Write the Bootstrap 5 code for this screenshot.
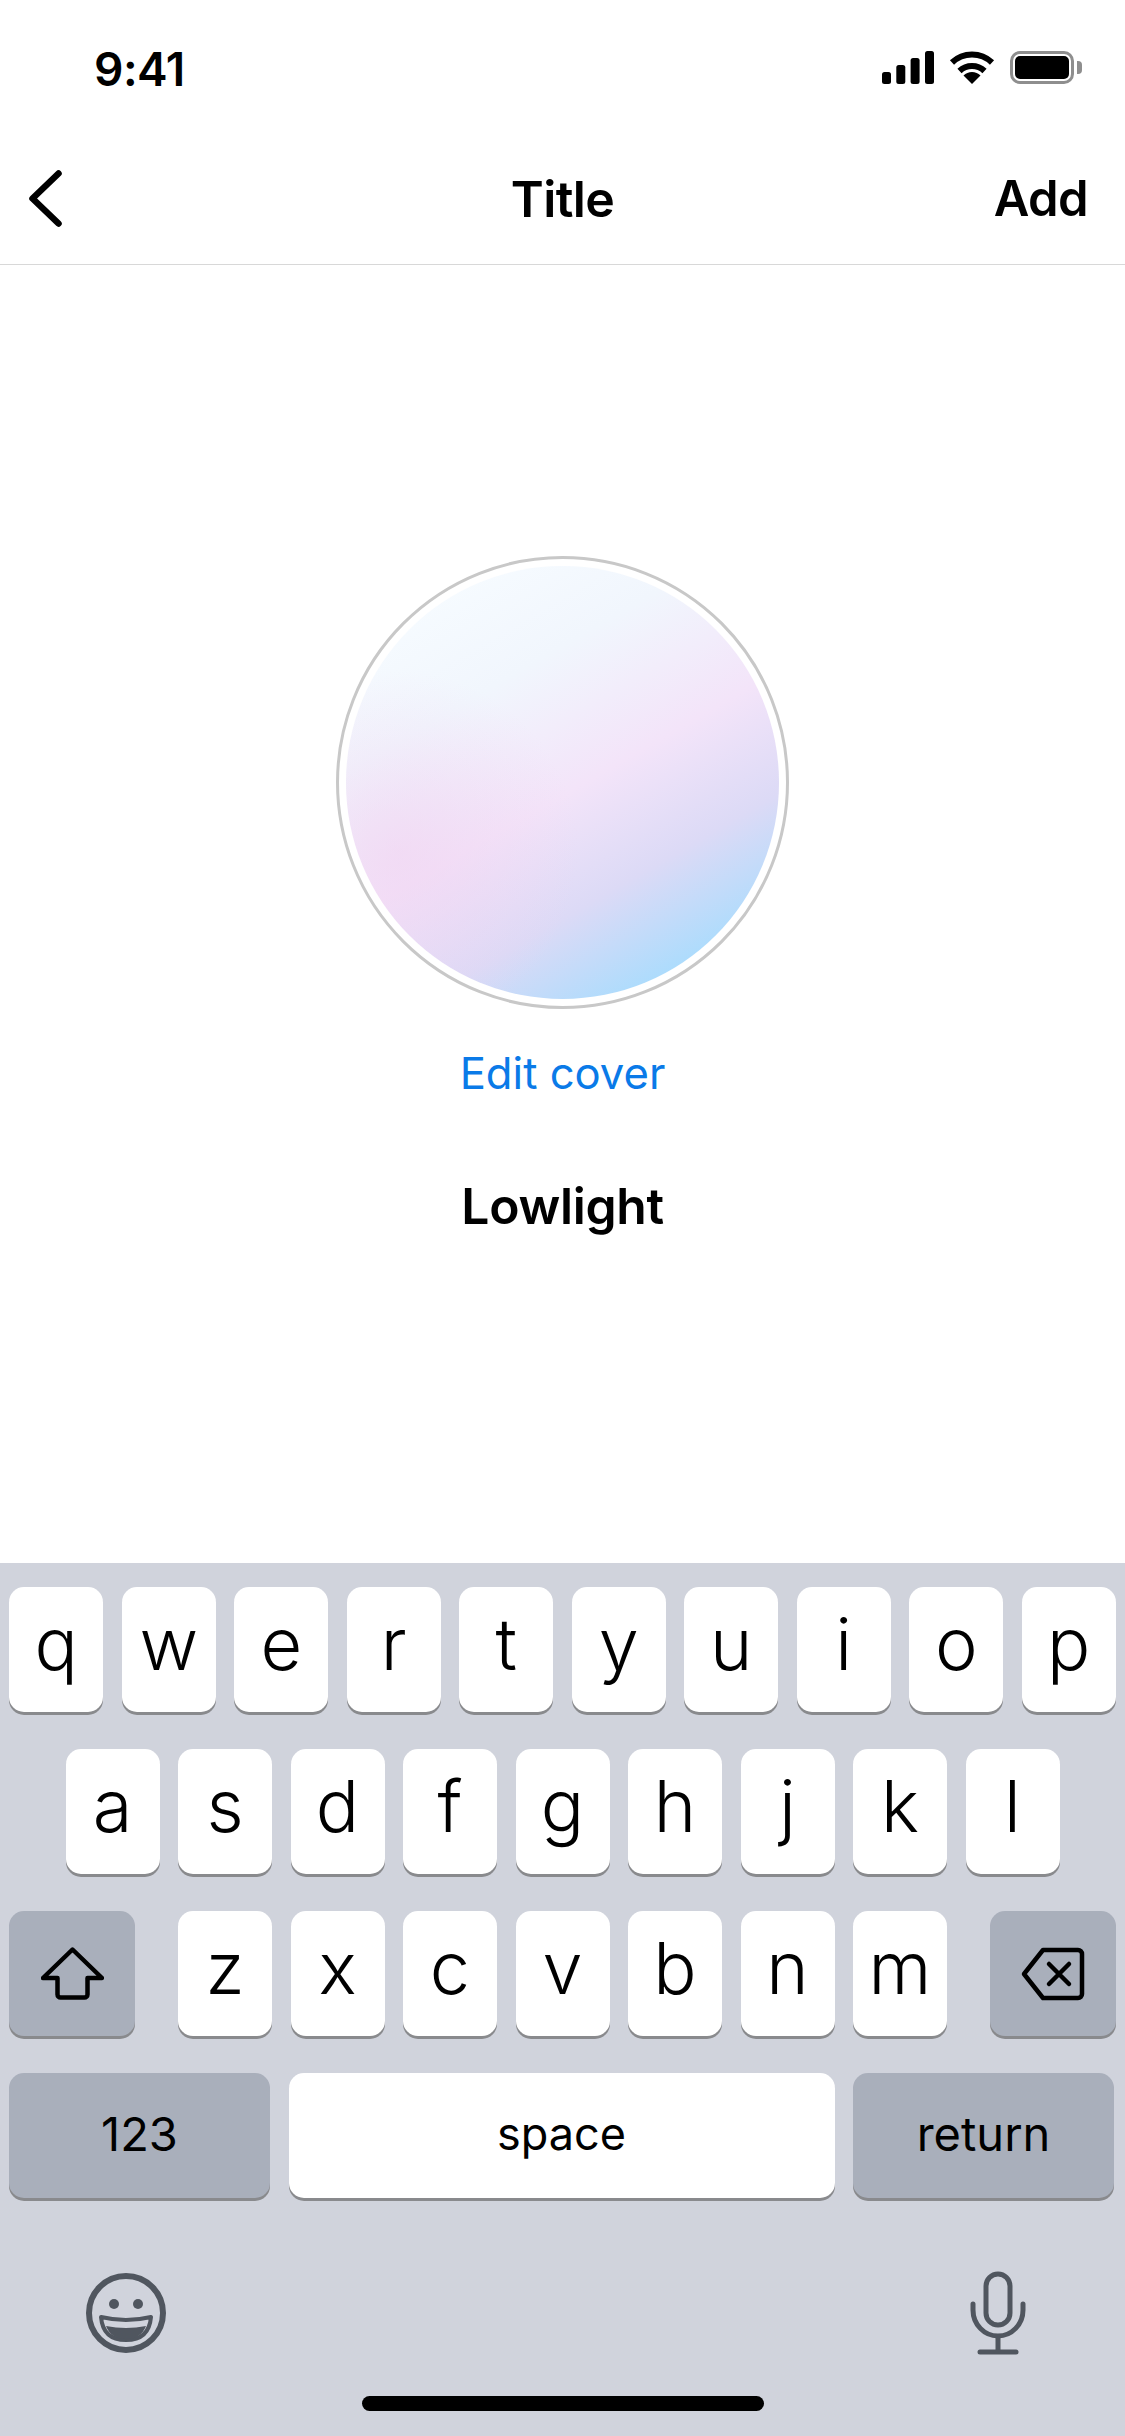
<!DOCTYPE html>
<html lang="en">
<head>
  <meta charset="UTF-8" />
  <title>Title</title>
  <meta name="viewport" content="width=device-width, initial-scale=1" />
  <link href="https://cdn.jsdelivr.net/npm/bootstrap@5.3.3/dist/css/bootstrap.min.css" rel="stylesheet" />
  <style>
    :root {
      --kb-bg: #d0d3dc;
      --kb-gray: #a9afbb;
      --kb-shadow: #898a8d;
      --kb-icon: #50565f;
    }
    html, body {
      margin: 0;
      height: 2436px;
      overflow: hidden;
      background: #fff;
      color: #000;
      font-family: Inter, "Liberation Sans", sans-serif;
    }
    .phone { height: 2436px; }
    .status-row { height: 138px; padding: 51px 43px 0 94px; }
    .status-time { font-size: 46px; font-weight: 600; line-height: 37px; letter-spacing: -0.5px; }
    .status-icons { gap: 15px; }
    .batt-box {
      width: 64px; height: 33px; padding: 2px;
      border: 3px solid #8e8e8e; border-radius: 10px;
    }
    .batt-fill { height: 100%; background: #000; border-radius: 5px; }
    .batt-nub { width: 5px; height: 13px; margin-left: 3px; background: #8e8e8e; border-radius: 0 4px 4px 0; }
    .top-nav { height: 127px; padding: 0 37px 5px 37px; border-bottom: 1px solid #d8d8d8; }
    .nav-side { flex: 1 1 0; }
    .nav-back { margin-left: -8px; }
    .nav-title { font-size: 50px; font-weight: 600; letter-spacing: -0.6px; line-height: 56px; }
    .nav-add { font-size: 49px; font-weight: 600; letter-spacing: -0.6px; line-height: 56px; }
    .cover-area { padding-top: 291px; }
    .cover-ring {
      width: 453px; height: 453px; padding: 7px;
      border: 3px solid #c8c8c8; border-radius: 50%;
    }
    .cover-fill {
      width: 100%; height: 100%; border-radius: 50%;
      background:
        radial-gradient(circle at 12% 66%, rgba(240, 208, 240, .55), rgba(240, 208, 240, 0) 38%),
        linear-gradient(150deg, #f6fbff 12%, #f1f6fd 30%, #f3e4f9 52%, #dcdaf6 70%, #a9dcfd 88%);
    }
    .edit-link { margin-top: 39px; font-size: 43.6px; line-height: 52px; color: #0a7ae8; text-decoration: none; }
    .cover-name { margin-top: 77px; font-size: 49.8px; font-weight: 600; line-height: 58px; letter-spacing: -0.3px; }
    .keyboard { height: 873px; padding: 24px 9px 24px; background: var(--kb-bg); }
    .key-row { gap: 18.5px; height: 125px; margin-bottom: 37px; }
    .kb-key {
      width: 94px; height: 125px; padding: 0 0 12px; border: 0; border-radius: 15px;
      background: #fff; color: #000;
      box-shadow: 0 3px 0 var(--kb-shadow);
      font-size: 72px; font-weight: 300; line-height: 1;
    }
    .kb-key.gray { background: var(--kb-gray); }
    .kb-wide { width: 126px; padding: 0; }
    .kb-mode { width: 261px; font-size: 47px; font-weight: 400; padding-bottom: 4px; }
    .kb-space { flex: 1 1 0; font-size: 45px; font-weight: 400; padding-bottom: 4px; }
    .kb-letters { gap: 18.5px; }
    .key-row-last { margin-right: 2px; }
    .kb-tools { height: 84px; margin-top: 73px; padding: 0 90px 0 77px; }
    .home-bar { width: 402px; height: 15px; margin: 41px auto 0; background: #000; border-radius: 8px; }
  </style>
</head>
<body>
  <div class="phone d-flex flex-column">
    <div class="status-row d-flex justify-content-between align-items-start">
      <span class="status-time">9:41</span>
      <div class="status-icons d-flex align-items-center">
        <svg width="52" height="33" viewBox="0 0 52 33" fill="#000">
          <rect x="0" y="21" width="9" height="12" rx="2.5"/>
          <rect x="14.3" y="14" width="9" height="19" rx="2.5"/>
          <rect x="28.6" y="7" width="9" height="26" rx="2.5"/>
          <rect x="43" y="0" width="9" height="33" rx="2.5"/>
        </svg>
        <svg width="46" height="33" viewBox="0 0 46 33" fill="none" stroke="#000" stroke-width="6">
          <path d="M3 11.5A29 29 0 0 1 43 11.5"/>
          <path d="M10.5 20A18 18 0 0 1 35.500 20"/>
          <path d="M23 33L14.500 24.500A12 12 0 0 1 31.500 24.500Z" fill="#000" stroke="none"/>
        </svg>
        <div class="d-flex align-items-center">
          <div class="batt-box"><div class="batt-fill"></div></div>
          <div class="batt-nub"></div>
        </div>
      </div>
    </div>
    <nav class="top-nav d-flex align-items-center">
      <div class="nav-side d-flex">
        <svg class="nav-back" width="33" height="57" viewBox="0 0 33 57" fill="none" stroke="#000" stroke-width="6.500" stroke-linecap="round" stroke-linejoin="round">
          <path d="M29.500 3.500L3.500 28.500L29.500 53.500"/>
        </svg>
      </div>
      <div class="nav-title">Title</div>
      <div class="nav-side text-end nav-add">Add</div>
    </nav>
    <main class="cover-area d-flex flex-column align-items-center">
      <div class="cover-ring"><div class="cover-fill"></div></div>
      <a class="edit-link" href="#">Edit cover</a>
      <div class="cover-name">Lowlight</div>
    </main>
    <div class="keyboard mt-auto">
      <div class="key-row d-flex justify-content-center">
        <button class="kb-key">q</button><button class="kb-key">w</button><button class="kb-key">e</button><button class="kb-key">r</button><button class="kb-key">t</button><button class="kb-key">y</button><button class="kb-key">u</button><button class="kb-key">i</button><button class="kb-key">o</button><button class="kb-key">p</button>
      </div>
      <div class="key-row d-flex justify-content-center">
        <button class="kb-key">a</button><button class="kb-key">s</button><button class="kb-key">d</button><button class="kb-key">f</button><button class="kb-key">g</button><button class="kb-key">h</button><button class="kb-key">j</button><button class="kb-key">k</button><button class="kb-key">l</button>
      </div>
      <div class="key-row d-flex justify-content-between">
        <button class="kb-key kb-wide gray d-flex align-items-center justify-content-center" aria-label="shift">
          <svg width="63" height="54" viewBox="0 0 63 54" fill="none" stroke="#000" stroke-width="4.500" stroke-linejoin="round">
            <path d="M31.500 2.500L61 31H46.500V47.500a3 3 0 0 1-3 3H19.500a3 3 0 0 1-3-3V31H2Z"/>
          </svg>
        </button>
        <div class="kb-letters d-flex">
          <button class="kb-key">z</button><button class="kb-key">x</button><button class="kb-key">c</button><button class="kb-key">v</button><button class="kb-key">b</button><button class="kb-key">n</button><button class="kb-key">m</button>
        </div>
        <button class="kb-key kb-wide gray d-flex align-items-center justify-content-center" aria-label="delete">
          <svg width="64" height="54" viewBox="0 0 64 54" fill="none" stroke="#000" stroke-width="4.500" stroke-linejoin="round" stroke-linecap="round">
            <path d="M22 3H57a4 4 0 0 1 4 4V47a4 4 0 0 1-4 4H22L3 27Z"/>
            <path d="M28 17L48 37M48 17L28 37"/>
          </svg>
        </button>
      </div>
      <div class="key-row key-row-last d-flex">
        <button class="kb-key kb-mode gray">123</button>
        <button class="kb-key kb-space">space</button>
        <button class="kb-key kb-mode gray">return</button>
      </div>
      <div class="kb-tools d-flex justify-content-between align-items-center">
        <svg width="80" height="80" viewBox="0 0 80 80" fill="none" stroke="#50565f">
          <circle cx="40" cy="40" r="37" stroke-width="6"/>
          <circle cx="28" cy="31" r="5" fill="#50565f" stroke="none"/>
          <circle cx="52" cy="31" r="5" fill="#50565f" stroke="none"/>
          <path d="M15 44Q40 50 65 44Q63 67 40 67Q17 67 15 44Z" stroke-width="4" stroke-linejoin="round"/>
          <path d="M20 53Q40 57 60 53Q55 66 40 66Q25 66 20 53Z" fill="#50565f" stroke="none"/>
        </svg>
        <svg width="56" height="84" viewBox="0 0 56 84" fill="none" stroke="#50565f" stroke-width="5" stroke-linecap="round">
          <rect x="16" y="3" width="24" height="51" rx="12"/>
          <path d="M3 33V39A25 26 0 0 0 53 39V33"/>
          <path d="M28 66V81" stroke-linecap="butt"/>
          <path d="M10 81H46"/>
        </svg>
      </div>
      <div class="home-bar"></div>
    </div>
  </div>
  <script src="https://cdn.jsdelivr.net/npm/bootstrap@5.3.3/dist/js/bootstrap.bundle.min.js"></script>
</body>
</html>
